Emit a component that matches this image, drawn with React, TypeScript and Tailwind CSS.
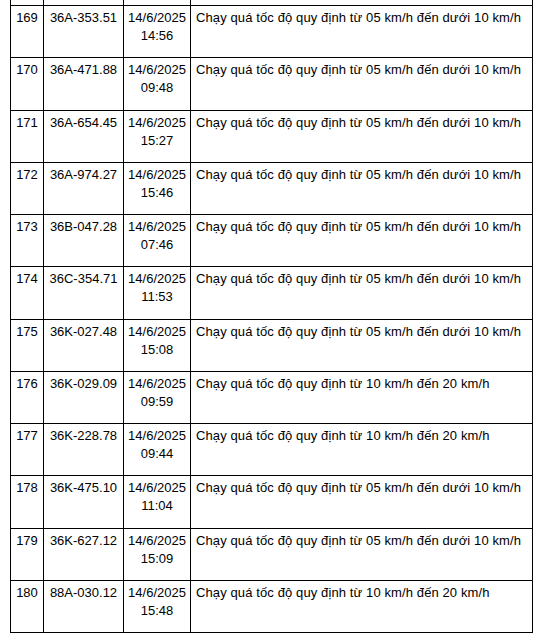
import React from "react";

const A = "Chạy quá tốc độ quy định từ 05 km/h đến dưới 10 km/h";
const B = "Chạy quá tốc độ quy định từ 10 km/h đến 20 km/h";

const rows: [string, string, string, string][] = [
  ["169", "36A-353.51", "14:56", A],
  ["170", "36A-471.88", "09:48", A],
  ["171", "36A-654.45", "15:27", A],
  ["172", "36A-974.27", "15:46", A],
  ["173", "36B-047.28", "07:46", A],
  ["174", "36C-354.71", "11:53", A],
  ["175", "36K-027.48", "15:08", A],
  ["176", "36K-029.09", "09:59", B],
  ["177", "36K-228.78", "09:44", B],
  ["178", "36K-475.10", "11:04", A],
  ["179", "36K-627.12", "15:09", A],
  ["180", "88A-030.12", "15:48", B],
];

export default function App() {
  return (
    <div className="bg-white w-[540px] h-[639px] overflow-hidden pl-[10px]" style={{ fontFamily: '"Liberation Sans", Arial, sans-serif' }}>
      <table className="mt-[-47.25px] w-[522px] table-fixed border-collapse text-[13px] leading-[18.2px] text-black">
        <colgroup>
          <col className="w-[33px]" />
          <col className="w-[80px]" />
          <col className="w-[67px]" />
          <col className="w-[342px]" />
        </colgroup>
        <tbody>
          <tr className="h-[52.25px]">
            <td className="border border-black p-0"></td>
            <td className="border border-black p-0"></td>
            <td className="border border-black p-0"></td>
            <td className="border border-black p-0"></td>
          </tr>
          {rows.map(([n, plate, time, desc]) => (
            <tr key={n}>
              <td className="border border-black pt-[3px] pb-[11.85px] px-0 text-center align-top">{n}</td>
              <td className="border border-black pt-[3px] pb-[11.85px] px-0 text-center align-top whitespace-nowrap">{plate}</td>
              <td className="border border-black pt-[3px] pb-[11.85px] px-0 text-center align-top">
                <div>14/6/2025</div>
                <div>{time}</div>
              </td>
              <td className="border border-black pt-[3px] pb-[11.85px] px-[5px] text-left align-top whitespace-nowrap tracking-[0.11px]">{desc}</td>
            </tr>
          ))}
        </tbody>
      </table>
    </div>
  );
}
